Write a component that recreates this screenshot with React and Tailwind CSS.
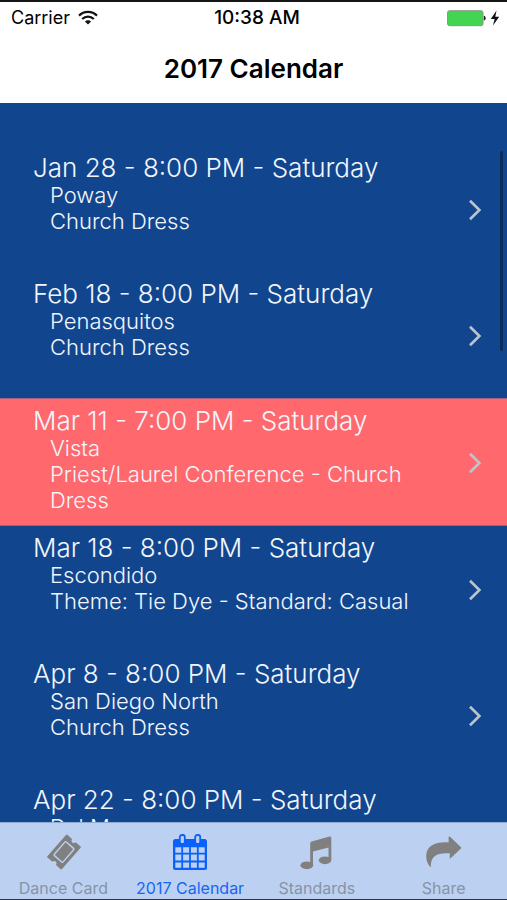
import React from "react";

const events = [
  { date: "Jan 28 - 8:00 PM - Saturday", place: "Poway", note: "Church Dress" },
  { date: "Feb 18 - 8:00 PM - Saturday", place: "Penasquitos", note: "Church Dress" },
  { date: "Mar 11 - 7:00 PM - Saturday", place: "Vista", note: "Priest/Laurel Conference - Church Dress", special: true },
  { date: "Mar 18 - 8:00 PM - Saturday", place: "Escondido", note: "Theme: Tie Dye - Standard: Casual" },
  { date: "Apr 8 - 8:00 PM - Saturday", place: "San Diego North", note: "Church Dress" },
  { date: "Apr 22 - 8:00 PM - Saturday", place: "Del Mar", note: "" },
];

function WifiIcon() {
  return (
    <svg className="h-4 w-5" viewBox="0 0 20 16" fill="none" stroke="#111" strokeWidth="2.2" aria-hidden="true">
      <path d="M1 5.6C6 .6 14 .6 19 5.6" />
      <path d="M4.2 9C7.4 5.8 12.6 5.8 15.8 9" />
      <path d="M10 14.6 6.9 11.4C8.6 9.8 11.4 9.8 13.1 11.4Z" fill="#111" stroke="none" />
    </svg>
  );
}

function BatteryIcon() {
  return (
    <svg className="h-5 w-14" viewBox="0 0 56 20" aria-hidden="true">
      <rect x="0.5" y="2.7" width="35.5" height="15" rx="2" fill="#42d551" stroke="#8c948c" />
      <path d="M36.8 7.8C39.3 8 39.3 12.4 36.8 12.6Z" fill="#222" />
      <path d="M49.5 2.5 43.8 11H47.6L46 17.5 52.2 8.8H48.3Z" fill="#111" />
    </svg>
  );
}

function TicketIcon() {
  return (
    <svg className="h-9 w-9" viewBox="0 0 36 36" aria-hidden="true">
      <g transform="rotate(-49 19 18)">
        <path
          d="M4.8 9.2H33.2V14.9A3.2 3.2 0 0 0 33.2 21.1V26.8H4.8V21.1A3.2 3.2 0 0 0 4.8 14.9Z"
          fill="#808080"
          stroke="#808080"
          strokeWidth="1.8"
          strokeLinejoin="round"
        />
        <rect x="10" y="12.2" width="18" height="11.6" rx="1" fill="none" stroke="#bcd1f1" strokeWidth="1.4" />
      </g>
    </svg>
  );
}

function CalendarIcon() {
  return (
    <svg className="h-9 w-9" viewBox="0 0 36 36" aria-hidden="true">
      <rect x="1" y="5" width="34" height="31" rx="2.5" fill="#0a60fb" />
      <g fill="#bcd1f1">
        <path d="M3.3 13.3h6v5.5h-6zM11.1 13.3h6v5.5h-6zM18.9 13.3h6v5.5h-6zM26.7 13.3h6v5.5h-6z" />
        <path d="M3.3 20.6h6v6h-6zM11.1 20.6h6v6h-6zM18.9 20.6h6v6h-6zM26.7 20.6h6v6h-6z" />
        <path d="M3.3 28.4h6v5.4h-6zM11.1 28.4h6v5.4h-6zM18.9 28.4h6v5.4h-6zM26.7 28.4h6v5.4h-6z" />
      </g>
      <g fill="#bcd1f1" stroke="#0a60fb" strokeWidth="1.8">
        <rect x="7.8" y="1" width="5" height="9" rx="2" />
        <rect x="23.2" y="1" width="5" height="9" rx="2" />
      </g>
    </svg>
  );
}

function MusicIcon() {
  return (
    <svg className="h-9 w-9" viewBox="0 0 36 36" fill="#808080" aria-hidden="true">
      <path d="M11.2 9.2Q11.2 7.8 12.6 7.4L30.5 2.6Q32.3 2.2 32.3 4V26H29.5V13.4L14 17.6V31H11.2Z" />
      <ellipse cx="7.8" cy="31.3" rx="6.4" ry="3.9" />
      <ellipse cx="26" cy="26.3" rx="6.2" ry="3.9" />
    </svg>
  );
}

function ShareIcon() {
  return (
    <svg className="h-9 w-9" viewBox="0 0 36 36" fill="#808080" aria-hidden="true">
      <path d="M23.8 2.6 35 13.2Q35.4 13.8 35 14.4L23.8 25V19.3C12 18.6 4.4 20.8 4.8 33.6 1.6 30.6 0 25.6.2 21.6.8 11.6 9.2 7.6 22.6 8.4V3Q23 2 23.8 2.6Z" />
    </svg>
  );
}

function Chevron() {
  return (
    <svg className="h-6 w-4 shrink-0" viewBox="0 0 16 24" fill="none" stroke="#bdc3cc" strokeWidth="2.6" aria-hidden="true">
      <path d="M3 3.8 12.4 13 3 22.2" />
    </svg>
  );
}

const tabs = [
  { label: "Dance Card", Icon: TicketIcon },
  { label: "2017 Calendar", Icon: CalendarIcon, active: true },
  { label: "Standards", Icon: MusicIcon },
  { label: "Share", Icon: ShareIcon },
];

export default function App() {
  return (
    <div className="flex h-screen flex-col border-t-2 border-b border-t-[#161616] border-b-[#28344d] bg-white font-[Inter,'Liberation_Sans',sans-serif]">
      <header className="shrink-0 pb-4 text-black">
        <div className="grid h-8 grid-cols-3 items-center pr-1 pl-[11px] text-lg">
          <div className="flex items-center gap-2">
            <span>Carrier</span>
            <WifiIcon />
          </div>
          <time className="text-center text-[19px] font-medium">10:38 AM</time>
          <div className="flex justify-end">
            <BatteryIcon />
          </div>
        </div>
        <h1 className="pt-[17px] text-center text-[26px] leading-9 font-semibold">2017 Calendar</h1>
      </header>

      <main className="relative min-h-0 flex-1 bg-[#11468f]">
        <ul className="h-full overflow-hidden pt-[43px] font-[350] text-[#f2f6fc]">
          {events.map((e) => (
            <li
              key={e.date}
              className={
                e.special
                  ? "border-y border-[#a85e80] bg-[#ff696e]"
                  : ""
              }
            >
              <a href="#" className="flex h-[126px] items-center justify-between pr-6 pl-[33px]">
                <div className="h-full min-w-0 pt-2">
                  <h2 className="text-[26px] leading-7 font-[350]">{e.date}</h2>
                  <div className="max-w-[390px] pl-[17px] text-[22px] leading-[26px]">
                    <p>{e.place}</p>
                    <p>{e.note}</p>
                  </div>
                </div>
                <Chevron />
              </a>
            </li>
          ))}
        </ul>
        <div className="absolute top-12 right-1 h-[200px] w-[3px] rounded-full bg-[#0c2c5c]" />
      </main>

      <nav className="grid shrink-0 grid-cols-4 border-t border-[#8fa9cf] bg-[#bcd1f1] pt-[11px] pb-px">
        {tabs.map(({ label, Icon, active }) => (
          <button
            key={label}
            type="button"
            className={
              active
                ? "flex flex-col items-center gap-2 whitespace-nowrap text-[#1765f3]"
                : "flex flex-col items-center gap-2 whitespace-nowrap text-[#8793a6]"
            }
          >
            <Icon />
            <span className="text-base leading-5">{label}</span>
          </button>
        ))}
      </nav>
    </div>
  );
}
